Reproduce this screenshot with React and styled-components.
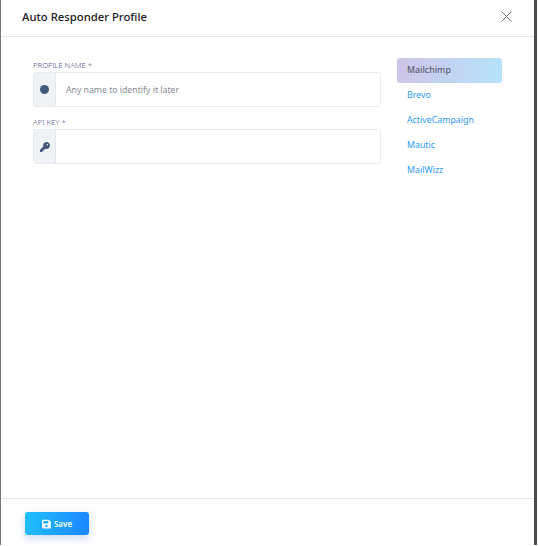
import React from "react";
import styled, { createGlobalStyle } from "styled-components";

const GlobalStyle = createGlobalStyle`
  html, body {
    margin: 0;
    height: 100%;
    background: #fff;
    overflow: hidden;
  }
  #root { height: 100%; }
`;

const Backdrop = styled.div`
  width: 537px;
  height: 545px;
  background: #4a4d50;
  padding-right: 3px;
  box-sizing: border-box;
  font-family: "Noto Sans", "Open Sans", sans-serif;
`;

const Dialog = styled.div`
  height: 100%;
  background: #fff;
  border-left: 1px solid #75787b;
  display: flex;
  flex-direction: column;
  box-sizing: border-box;
`;

const Header = styled.div`
  height: 37px;
  flex: none;
  box-sizing: border-box;
  border-bottom: 1px solid #e4e6ea;
  display: flex;
  align-items: center;
  justify-content: space-between;
  padding: 0 22px 3px 21px;
`;

const Title = styled.h5`
  margin: 0;
  font-size: 11.3px;
  font-weight: 500;
  color: #1c2024;
`;

const CloseButton = styled.button`
  border: 0;
  background: none;
  padding: 0;
  width: 11px;
  height: 11px;
  display: flex;
  color: #6f7479;
`;

const Body = styled.div`
  flex: 1;
  display: flex;
  padding: 21px 32px 0 32px;
  gap: 16px;
`;

const Form = styled.div`
  width: 348px;
  flex: none;
  display: flex;
  flex-direction: column;
  gap: 8px;
`;

const Field = styled.div`
  display: flex;
  flex-direction: column;
`;

const Label = styled.label`
  font-size: 7.7px;
  line-height: 14px;
  font-weight: 300;
  color: #55558f;
`;

const InputGroup = styled.div`
  display: flex;
  height: 35px;
  box-sizing: border-box;
  border: 1px solid #e9ebef;
  border-radius: 3px;
  overflow: hidden;
`;

const Addon = styled.span`
  width: 21px;
  flex: none;
  display: flex;
  align-items: center;
  justify-content: center;
  background: #eff3f6;
  border-right: 1px solid #e3e7eb;
  color: #44597a;
`;

const Dot = styled.i`
  width: 9px;
  height: 9px;
  border-radius: 50%;
  background: #44597a;
`;

const Input = styled.input`
  flex: 1;
  min-width: 0;
  border: 0;
  outline: 0;
  padding: 0 10px;
  font: inherit;
  font-size: 8.7px;
  color: #333;
  &::placeholder { color: #878d96; opacity: 1; }
`;

const Nav = styled.nav`
  width: 105px;
  flex: none;
  display: flex;
  flex-direction: column;
`;

const NavItem = styled.a`
  height: 25px;
  display: flex;
  align-items: center;
  padding-left: 10px;
  padding-bottom: 1px;
  box-sizing: border-box;
  border-radius: 3px;
  font-size: 8.8px;
  font-weight: ${(p) => (p.$active ? 500 : 400)};
  color: ${(p) => (p.$active ? "#5c5f6e" : "#2a9bf5")};
  background: ${(p) => (p.$active ? "linear-gradient(100deg, #cfc4e8, #b5e3fc)" : "none")};
`;

const Footer = styled.div`
  height: 47px;
  flex: none;
  box-sizing: border-box;
  border-top: 1px solid #e4e6ea;
  padding: 13px 24px 0;
`;

const SaveButton = styled.button`
  width: 64px;
  height: 23px;
  border: 0;
  border-radius: 3px;
  display: flex;
  align-items: center;
  justify-content: center;
  gap: 3px;
  color: #fff;
  font: inherit;
  font-size: 8px;
  font-weight: 600;
  background: linear-gradient(100deg, #1fc0fe, #1a85fe);
  box-shadow: 0 3px 8px rgba(30, 100, 180, 0.25);
`;

const providers = ["Mailchimp", "Brevo", "ActiveCampaign", "Mautic", "MailWizz"];

function KeyIcon() {
  return (
    <svg width="10" height="10" viewBox="0 0 512 512" fill="currentColor">
      <path d="M336 352c97.2 0 176-78.800 176-176S433.200 0 336 0S160 78.800 160 176c0 18.700 2.900 36.800 8.300 53.700L7 391c-4.500 4.500-7 10.600-7 17v80c0 13.300 10.700 24 24 24h80c13.300 0 24-10.700 24-24V448h40c13.300 0 24-10.700 24-24V384h40c6.400 0 12.500-2.500 17-7l33.300-33.300c16.900 5.400 35 8.300 53.700 8.300zM376 96a40 40 0 1 1 0 80 40 40 0 1 1 0-80z" />
    </svg>
  );
}

function SaveIcon() {
  return (
    <svg width="9" height="10" viewBox="0 0 448 512" fill="currentColor">
      <path d="M64 32C28.700 32 0 60.700 0 96V416c0 35.300 28.700 64 64 64H384c35.300 0 64-28.700 64-64V173.300c0-17-6.700-33.300-18.700-45.300L352 50.700C340 38.700 323.700 32 306.700 32H64zm0 96c0-17.700 14.300-32 32-32H288c17.700 0 32 14.300 32 32v64c0 17.700-14.300 32-32 32H96c-17.700 0-32-14.300-32-32V128zM224 288a64 64 0 1 1 0 128 64 64 0 1 1 0-128z" />
    </svg>
  );
}

export default function App() {
  return (
    <>
      <GlobalStyle />
      <Backdrop>
        <Dialog>
          <Header>
            <Title>Auto Responder Profile</Title>
            <CloseButton aria-label="Close">
              <svg width="11" height="11" viewBox="0 0 11 11" fill="none" stroke="currentColor" strokeWidth="1">
                <path d="M0.500 0.500L10.500 10.500M10.500 0.500L0.500 10.500" />
              </svg>
            </CloseButton>
          </Header>
          <Body>
            <Form>
              <Field>
                <Label>PROFILE NAME *</Label>
                <InputGroup>
                  <Addon><Dot /></Addon>
                  <Input placeholder="Any name to identify it later" />
                </InputGroup>
              </Field>
              <Field>
                <Label>API KEY *</Label>
                <InputGroup>
                  <Addon><KeyIcon /></Addon>
                  <Input />
                </InputGroup>
              </Field>
            </Form>
            <Nav>
              {providers.map((name, i) => (
                <NavItem key={name} $active={i === 0}>{name}</NavItem>
              ))}
            </Nav>
          </Body>
          <Footer>
            <SaveButton><SaveIcon />Save</SaveButton>
          </Footer>
        </Dialog>
      </Backdrop>
    </>
  );
}
